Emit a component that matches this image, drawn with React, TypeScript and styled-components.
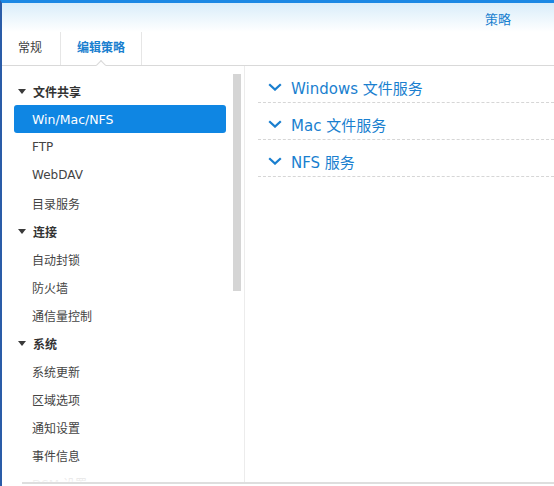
import { FC } from "react";
import { styled, createGlobalStyle } from "styled-components";

const GlobalStyle = createGlobalStyle`
  html, body {
    margin: 0;
    padding: 0;
    background: #fff;
  }
  body {
    font-family: "DejaVu Sans", "Noto Sans CJK SC", sans-serif;
    font-size: 12px;
    color: #404040;
  }
`

interface NavEntry {
  label: string
  group?: boolean
  selected?: boolean
}

const entries: NavEntry[] = [
  { label: "文件共享", group: true },
  { label: "Win/Mac/NFS", selected: true },
  { label: "FTP" },
  { label: "WebDAV" },
  { label: "目录服务" },
  { label: "连接", group: true },
  { label: "自动封锁" },
  { label: "防火墙" },
  { label: "通信量控制" },
  { label: "系统", group: true },
  { label: "系统更新" },
  { label: "区域选项" },
  { label: "通知设置" },
  { label: "事件信息" },
  { label: "DSM 设置" },
]

const sections = ["Windows 文件服务", "Mac 文件服务", "NFS 服务"]

const Caret: FC = () => (
  <svg width="8" height="5" viewBox="0 0 8 5">
    <path d="M0 0h8L4 5z" fill="#3a3a3a" />
  </svg>
)

const Chevron: FC = () => (
  <svg width="14" height="8" viewBox="0 0 14 8">
    <path d="M1.2 1.2 7 6.6l5.8-5.4" fill="none" stroke="#1a7fcf" strokeWidth="2.2" />
  </svg>
)

const App: FC = () => {
  return (
    <>
      <GlobalStyle />
      <Window>
        <Header>
          <Title>策略</Title>
        </Header>
        <Tabs>
          <Tab>常规</Tab>
          <Tab $active>编辑策略</Tab>
        </Tabs>
        <Body>
          <Sidebar>
            <NavList>
              {entries.map((e) =>
                e.group ? (
                  <GroupRow key={e.label}>
                    <Caret />
                    <span>{e.label}</span>
                  </GroupRow>
                ) : (
                  <NavItem key={e.label} $selected={e.selected}>
                    {e.label}
                  </NavItem>
                )
              )}
            </NavList>
            <Fade />
            <ScrollThumb />
          </Sidebar>
          <Content>
            {sections.map((s) => (
              <Section key={s}>
                <Chevron />
                <SectionTitle>{s}</SectionTitle>
              </Section>
            ))}
          </Content>
        </Body>
        <Footer />
      </Window>
    </>
  )
}

export default App

const Window = styled.div`
  height: 486px;
  box-sizing: border-box;
  border-top: 3px solid #1b88e4;
  border-left: 2px solid #2a5ca8;
  display: flex;
  flex-direction: column;
  overflow: hidden;
`

const Header = styled.div`
  height: 29px;
  flex: none;
  display: flex;
  align-items: center;
  justify-content: flex-end;
  padding-right: 43px;
  background: linear-gradient(to bottom, #d9edfa, #ffffff);
`

const Title = styled.div`
  font-size: 13px;
  color: #1a7fcf;
  padding-top: 1px;
`

const Tabs = styled.div`
  height: 33px;
  flex: none;
  display: flex;
  border-bottom: 1px solid #d9d9d9;
`

const Tab = styled.div<{ $active?: boolean }>`
  position: relative;
  display: flex;
  align-items: center;
  padding: 0 16px 4px;
  font-size: 12px;
  color: ${(p) => (p.$active ? "#1a7fcf" : "#404040")};
  font-weight: ${(p) => (p.$active ? "bold" : "normal")};
  border-right: 1px solid #e6e6e6;

  &:first-child {
    padding-right: 18px;
  }

  ${(p) =>
    p.$active &&
    `
    &::after {
      content: "";
      position: absolute;
      left: 50%;
      bottom: 0;
      width: 6px;
      height: 6px;
      background: #fff;
      border-left: 1px solid #d9d9d9;
      border-top: 1px solid #d9d9d9;
      transform: translate(-50%, 50%) rotate(45deg);
    }
  `}
`

const Body = styled.div`
  flex: 1;
  display: flex;
  min-height: 0;
`

const Sidebar = styled.div`
  position: relative;
  width: 242px;
  flex: none;
  overflow: hidden;
`

const NavList = styled.div`
  padding: 11px 0 0 12px;
  width: 212px;
  display: flex;
  flex-direction: column;
`

const GroupRow = styled.div`
  height: 28px;
  display: flex;
  align-items: center;
  gap: 7px;
  padding-left: 4px;
  font-weight: bold;
  color: #333;

  svg {
    flex: none;
  }
`

const NavItem = styled.div<{ $selected?: boolean }>`
  height: 28px;
  display: flex;
  align-items: center;
  padding-left: 18px;
  border-radius: 3px;
  font-size: ${(p) => (p.$selected ? "12.5px" : "12px")};
  color: ${(p) => (p.$selected ? "#fff" : "#444")};
  background: ${(p) => (p.$selected ? "#0f86e3" : "transparent")};
`

const Fade = styled.div`
  position: absolute;
  left: 0;
  right: 0;
  bottom: 0;
  height: 14px;
  background: linear-gradient(to bottom, rgba(255, 255, 255, 0.6), rgba(255, 255, 255, 0.95));
`

const ScrollThumb = styled.div`
  position: absolute;
  left: 231px;
  top: 8px;
  width: 8px;
  height: 217px;
  background: #d5d5d5;
`

const Content = styled.div`
  flex: 1;
  border-left: 1px solid #ececec;
  padding-left: 13px;
  display: flex;
  flex-direction: column;
`

const Section = styled.div`
  height: 36px;
  border-bottom: 1px dashed #d6d6d6;
  display: flex;
  align-items: center;
  padding-left: 10px;
  gap: 9px;

  svg {
    flex: none;
    margin-top: 6px;
  }
`

const SectionTitle = styled.div`
  font-size: 15px;
  color: #1a7fcf;
  padding-top: 7px;
`

const Footer = styled.div`
  height: 2px;
  flex: none;
  margin: 0 0 2px 20px;
  background: #dedede;
`
